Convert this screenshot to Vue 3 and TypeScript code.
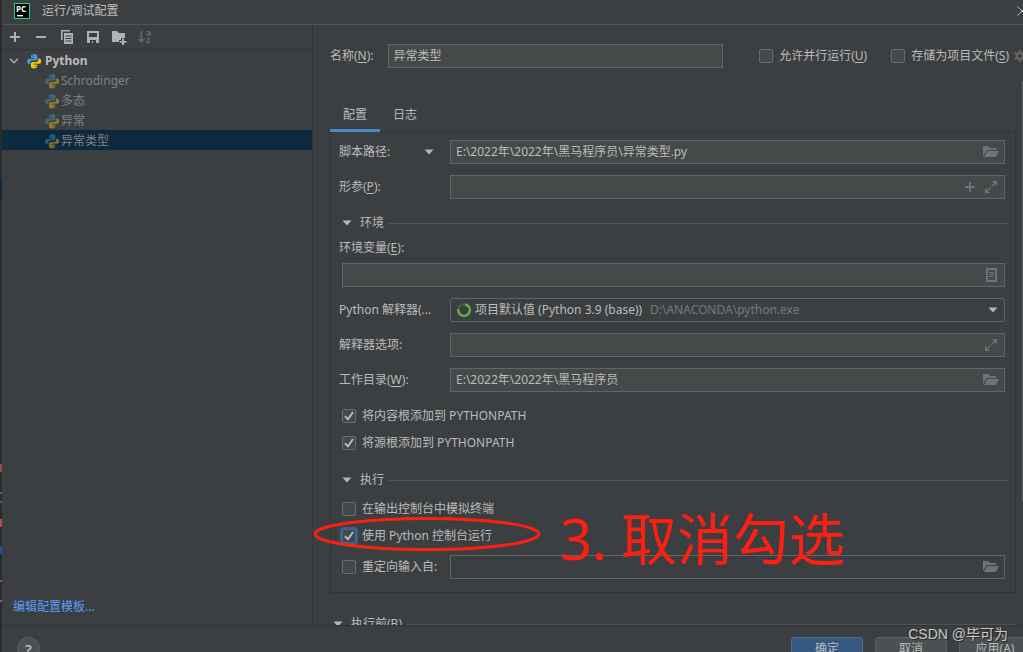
<script setup lang="ts">
import { ref } from 'vue'

const configs = ['Schrodinger', '多态', '异常', '异常类型']
const selected = ref('异常类型')
const name = ref('异常类型')
const scriptPath = ref('E:\\2022年\\2022年\\黑马程序员\\异常类型.py')
const params = ref('')
const envVars = ref('')
const interpreterOptions = ref('')
const workDir = ref('E:\\2022年\\2022年\\黑马程序员')
const redirectFrom = ref('')
const parallel = ref(false)
const storeAsFile = ref(false)
const addContentRoots = ref(true)
const addSourceRoots = ref(true)
const emulateTerminal = ref(false)
const runWithConsole = ref(true)
const redirectInput = ref(false)
</script>

<template>
  <div class="screen">
    <svg class="defs" width="0" height="0" aria-hidden="true">
      <defs>
        <symbol id="py" viewBox="0 0 16 16">
          <path class="py-blue" d="M8 1C5.6 1 5 2 5 3.2V5h3.4v.7H3.2C1.800 5.700 1 6.700 1 8.300s.8 2.700 2 2.700h1.300V9.400C4.300 8.200 5.300 7.400 6.400 7.400h3.300c1 0 1.700-.8 1.700-1.700V3.200C11.400 1.700 10.200 1 8 1zM6.500 2.200a.7.7 0 1 1 0 1.400.7.7 0 0 1 0-1.400z" />
          <path class="py-gold" d="M8.200 15.500c2.400 0 3-1 3-2.200v-1.800H7.800v-.7H13c1.400 0 2.200-1 2.200-2.600S14.400 5.500 13.200 5.500h-1v1.400c0 1.200-1 2-2.100 2H6.600c-1 0-1.700.8-1.700 1.700v2.700c0 1.500 1.200 2.200 3.300 2.200zm1.500-1.200a.7.7 0 1 1 0-1.400.7.7 0 0 1 0 1.400z" />
        </symbol>
        <symbol id="folder" viewBox="0 0 16 12">
          <path d="M0 0h5l2 2h6v2H4L0 10z" />
          <path d="M4.500 5H16l-3 6H1z" />
        </symbol>
        <symbol id="expand" viewBox="0 0 12 12">
          <path d="M7 0h5v5zM9 2l1 1-3 3-1-1zM0 7v5h5zM5 6l1 1-3 3-1-1z" />
        </symbol>
        <symbol id="down" viewBox="0 0 10 6"><path d="M0.500 0.500h9L5 5.500z" /></symbol>
        <symbol id="tick" viewBox="0 0 14 14"><path d="M3 7.200l3 3L11 3" fill="none" stroke="#bbbbbb" stroke-width="2" /></symbol>
      </defs>
    </svg>

    <div class="backdrop-edge"></div>
    <div class="dialog">
      <header class="titlebar">
        <svg class="logo" width="16" height="16" viewBox="0 0 16 16" aria-hidden="true">
          <rect width="16" height="16" fill="#21d789" /><rect x="1" y="1" width="14" height="14" fill="#000" />
          <text x="2" y="9" fill="#fff" font-size="8" font-weight="700">PC</text>
          <path d="M3 12h6v1.400H3z" fill="#fff" />
        </svg>
        <h1>运行/调试配置</h1>
        <button class="close" aria-label="关闭">
          <svg width="10" height="10" viewBox="0 0 10 10"><path d="M0.500 0.500l9 9M9.500 0.500l-9 9" fill="none" stroke="#bbb" /></svg>
        </button>
      </header>

      <div class="body">
        <aside class="sidebar">
          <div class="toolbar">
            <button aria-label="添加"><svg width="16" height="16" viewBox="0 0 16 16"><path d="M7 3h2v4h4v2H9v4H7V9H3V7h4z" /></svg></button>
            <button aria-label="移除"><svg width="16" height="16" viewBox="0 0 16 16"><path d="M3 7h10v2H3z" /></svg></button>
            <button aria-label="复制">
              <svg width="16" height="16" viewBox="0 0 16 16"><path d="M2 1h9v1.600H3.600V11H2z" /><path fill-rule="evenodd" d="M5 4h9v11H5zM6.500 6.500v1h6v-1zm0 2.500v1h6V9zm0 2.500v1h6v-1z" /></svg>
            </button>
            <button aria-label="保存">
              <svg width="16" height="16" viewBox="0 0 16 16"><path fill-rule="evenodd" d="M2 2h12v12H2zM4 4v4h8V4zm1 7v3h2v-2h1v2h3v-3z" /></svg>
            </button>
            <button aria-label="新建文件夹">
              <svg width="16" height="16" viewBox="0 0 16 16"><path d="M1 2h5l2 2h6v5h-4v2H8v2H1z" /><path d="M11 9.500h2V12h2.500v1.800H13V16h-2v-2.200H8.700V12H11z" /></svg>
            </button>
            <button class="sort" aria-label="排序" disabled>
              <svg width="16" height="16" viewBox="0 0 16 16"><path d="M3.500 2h1.800v8H8l-3.600 4L1 10h2.500z" /><text x="9" y="7" font-size="9" font-weight="700">a</text><text x="9" y="14" font-size="9" font-weight="700">z</text></svg>
            </button>
          </div>

          <div class="tree" role="tree">
            <div class="row root" role="treeitem" aria-expanded="true">
              <svg class="chevron" width="10" height="6" viewBox="0 0 10 6"><path d="M1 0.800l4 4 4-4" fill="none" stroke="#adadad" stroke-width="1.400" /></svg>
              <svg class="py" width="16" height="16"><use href="#py" /></svg>
              <span>Python</span>
            </div>
            <div
              v-for="c in configs"
              :key="c"
              class="row leaf"
              :class="{ selected: c === selected }"
              role="treeitem"
              :aria-selected="c === selected"
              @click="selected = c"
            >
              <svg class="py" width="16" height="16"><use href="#py" /></svg>
              <span>{{ c }}</span>
            </div>
          </div>
          <a class="templates" href="#">编辑配置模板...</a>
        </aside>

        <main class="main">
          <div class="name-row">
            <label for="name">名称(<u>N</u>):</label>
            <div class="field name-field"><input id="name" v-model="name" type="text" /></div>
            <label class="check parallel">
              <span class="box"><input v-model="parallel" type="checkbox" /><svg v-if="parallel" width="14" height="14"><use href="#tick" /></svg></span>
              <span>允许并行运行(<u>U</u>)</span>
            </label>
            <label class="check store">
              <span class="box"><input v-model="storeAsFile" type="checkbox" /><svg v-if="storeAsFile" width="14" height="14"><use href="#tick" /></svg></span>
              <span>存储为项目文件(<u>S</u>)</span>
            </label>
            <button class="gear" aria-label="存储设置">
              <svg width="12" height="12" viewBox="0 0 12 12"><g stroke="#636567" stroke-width="2.600"><path d="M6 0v12M0.800 3l10.400 6M0.800 9l10.400-6" /></g><circle cx="6" cy="6" r="4" fill="#636567" /><circle cx="6" cy="6" r="1.900" fill="#3c3f41" /></svg>
            </button>
          </div>

          <div class="tabs" role="tablist">
            <button class="tab active" role="tab" aria-selected="true">配置</button>
            <button class="tab" role="tab" aria-selected="false">日志</button>
          </div>

          <section class="panel">
            <div class="rows">
              <div class="form-row">
                <div class="label-col">
                  <label for="script">脚本路径:</label>
                  <button class="mode" aria-label="选择目标类型"><svg class="arrow" width="10" height="6"><use href="#down" /></svg></button>
                </div>
                <div class="field">
                  <input id="script" v-model="scriptPath" type="text" />
                  <button aria-label="浏览脚本"><svg width="16" height="12"><use href="#folder" /></svg></button>
                </div>
              </div>
              <div class="form-row">
                <label class="label-col" for="params"><span>形参(<u>P</u>):</span></label>
                <div class="field">
                  <input id="params" v-model="params" type="text" />
                  <button aria-label="插入宏"><svg width="10" height="10" viewBox="0 0 10 10"><path d="M4 0h2v4h4v2H6v4H4V6H0V4h4z" /></svg></button>
                  <button class="end" aria-label="展开形参"><svg width="12" height="12"><use href="#expand" /></svg></button>
                </div>
              </div>
            </div>

            <h2 class="section"><svg class="arrow" width="10" height="6"><use href="#down" /></svg><span>环境</span></h2>

            <div class="env">
              <label for="env">环境变量(<u>E</u>):</label>
              <div class="field">
                <input id="env" v-model="envVars" type="text" />
                <button class="end" aria-label="编辑环境变量">
                  <svg width="11" height="14" viewBox="0 0 11 14"><path fill-rule="evenodd" d="M0 0h11v14H0zM2 2v10h7V2z" /><path d="M3 4h5v1H3zM3 6h5v1H3zM3 8h5v1H3z" /></svg>
                </button>
              </div>
            </div>

            <div class="rows after-env">
              <div class="form-row">
                <label class="label-col" for="interpreter">Python 解释器(...</label>
                <div class="field combo">
                  <svg class="ring" width="14" height="14" viewBox="0 0 14 14"><circle cx="7" cy="7" r="5.800" fill="none" stroke="#3f7a35" stroke-width="2" stroke-dasharray="1.500 1" /><path d="M8 1.300A5.800 5.800 0 1 1 1.300 6" fill="none" stroke="#62b543" stroke-width="2.200" /></svg>
                  <select id="interpreter"><option>项目默认值 (Python 3.9 (base))</option></select>
                  <span class="exe">D:\ANACONDA\python.exe</span>
                  <svg class="arrow" width="10" height="6"><use href="#down" /></svg>
                </div>
              </div>
              <div class="form-row">
                <label class="label-col" for="iopts">解释器选项:</label>
                <div class="field">
                  <input id="iopts" v-model="interpreterOptions" type="text" />
                  <button class="end" aria-label="展开选项"><svg width="12" height="12"><use href="#expand" /></svg></button>
                </div>
              </div>
              <div class="form-row">
                <label class="label-col" for="workdir"><span>工作目录(<u>W</u>):</span></label>
                <div class="field">
                  <input id="workdir" v-model="workDir" type="text" />
                  <button aria-label="浏览目录"><svg width="16" height="12"><use href="#folder" /></svg></button>
                </div>
              </div>
            </div>

            <div class="checks roots">
              <label class="check">
                <span class="box"><input v-model="addContentRoots" type="checkbox" /><svg v-if="addContentRoots" width="14" height="14"><use href="#tick" /></svg></span>
                <span>将内容根添加到 PYTHONPATH</span>
              </label>
              <label class="check">
                <span class="box"><input v-model="addSourceRoots" type="checkbox" /><svg v-if="addSourceRoots" width="14" height="14"><use href="#tick" /></svg></span>
                <span>将源根添加到 PYTHONPATH</span>
              </label>
            </div>

            <h2 class="section"><svg class="arrow" width="10" height="6"><use href="#down" /></svg><span>执行</span></h2>

            <div class="checks">
              <label class="check">
                <span class="box"><input v-model="emulateTerminal" type="checkbox" /><svg v-if="emulateTerminal" width="14" height="14"><use href="#tick" /></svg></span>
                <span>在输出控制台中模拟终端</span>
              </label>
              <label class="check">
                <span class="box focused"><input v-model="runWithConsole" type="checkbox" /><svg v-if="runWithConsole" width="14" height="14"><use href="#tick" /></svg></span>
                <span>使用 Python 控制台运行</span>
              </label>
            </div>
            <div class="form-row redirect">
              <label class="check label-col">
                <span class="box"><input v-model="redirectInput" type="checkbox" /><svg v-if="redirectInput" width="14" height="14"><use href="#tick" /></svg></span>
                <span>重定向输入自:</span>
              </label>
              <div class="field off">
                <input v-model="redirectFrom" type="text" aria-label="重定向输入自" disabled />
                <button aria-label="浏览输入文件" disabled><svg width="16" height="12"><use href="#folder" /></svg></button>
              </div>
            </div>
          </section>

          <h2 class="section before"><svg class="arrow" width="10" height="6"><use href="#down" /></svg><span>执行前(<u>B</u>)</span></h2>
          <div class="scrollbar"></div>
        </main>
      </div>

      <footer class="footer">
        <button class="help" aria-label="帮助">?</button>
        <button class="btn primary">确定</button>
        <button class="btn">取消</button>
        <button class="btn">应用(<u>A</u>)</button>
      </footer>
    </div>

    <svg class="ellipse" width="228" height="36" viewBox="0 0 228 36" aria-hidden="true">
      <ellipse cx="113" cy="18" rx="112" ry="15.500" fill="none" stroke="#fd1f12" stroke-width="3" />
    </svg>
    <div class="note"><span>3.</span><span>取消勾选</span></div>
    <div class="watermark">CSDN @毕可为</div>
  </div>
</template>

<style>
html,
body,
#app {
  height: 100%;
  margin: 0;
  overflow: hidden;
  background: #3c3f41;
}
</style>

<style scoped>
.screen {
  position: relative;
  display: flex;
  height: 100%;
  overflow: hidden;
  color: #bbbbbb;
  font: 12px/20px "Noto Sans", "Noto Sans CJK SC", sans-serif;
}
.screen * { box-sizing: border-box; }
.defs { position: absolute; }
button, input, select { font: inherit; color: inherit; margin: 0; padding: 0; border: 0; background: none; outline: 0; }
button { display: flex; align-items: center; justify-content: center; }
svg { display: block; flex: none; }
h1, h2 { margin: 0; font: inherit; }
u { text-underline-offset: 2px; }
label { white-space: nowrap; }

.backdrop-edge {
  flex: none;
  width: 2px;
  background: linear-gradient(#2b2b2b 180px, #0d293e 180px 200px, #2b2b2b 200px 464px, #9c4a48 464px 472px, #2b2b2b 472px 492px, #2a62b5 492px 494px, #2b2b2b 494px 501px, #2a62b5 501px 503px, #2b2b2b 503px 519px, #b0504c 519px 527px, #2b2b2b 527px 546px, #214f9c 546px 554px, #2b2b2b 554px 580px, #b0504c 580px 582px, #2b2b2b 582px 600px, #b0504c 600px 602px, #2b2b2b 602px);
}
.dialog { flex: 1; min-width: 0; display: flex; flex-direction: column; }

.titlebar { flex: none; display: flex; align-items: center; gap: 12px; height: 25px; padding: 0 0 3px 12px; border-bottom: 1px solid #515355; }
.titlebar h1 { flex: 1; }
.logo { font-family: "Open Sans", sans-serif; }
.close { margin-right: -4px; }

.body { flex: 1; min-height: 0; display: flex; border-bottom: 1px solid #323435; }
.sidebar { flex: none; width: 311px; display: flex; flex-direction: column; border-right: 1px solid #323435; }
.toolbar { display: flex; gap: 10px; height: 25px; padding-left: 5px; border-bottom: 1px solid #323435; align-items: center; }
.toolbar svg { fill: #afb1b3; }
.toolbar .sort svg { fill: #66696b; }
.tree { flex: 1; }
.row { display: flex; align-items: center; height: 20px; padding-top: 2px; }
.root { padding-left: 7px; font-weight: 700; }
.root .py { margin: 0 3px 0 7px; }
.leaf { padding-left: 42px; color: #808284; }
.leaf .py { opacity: 0.45; margin-right: 1px; }
.selected { background: #0d293e; }
.py-blue { fill: #3e9bcf; }
.py-gold { fill: #f5c40b; }
.templates { align-self: flex-start; margin: 0 0 8px 11px; color: #589df6; text-decoration: none; }

.main { position: relative; flex: 1; min-width: 0; overflow: hidden; padding: 19px 7px 0 17px; }
.name-row { display: flex; align-items: center; margin-right: -10px; }
.name-field { margin: 0 36px 0 14px; }
.store { margin-left: 24px; }
.gear { flex: none; margin-left: 5px; }
.tabs { display: flex; margin-top: 32px; }
.tab { height: 32px; padding: 4px 13px 3px; border-bottom: 3px solid transparent; }
.tab.active { position: relative; border-bottom-color: #4a88c7; }

.panel { margin-top: -1px; padding: 8px 10px 13px 8px; border: 1px solid #323435; }
.rows { display: flex; flex-direction: column; gap: 11px; }
.after-env { margin-top: 11px; }
.form-row { display: flex; align-items: center; }
.label-col { flex: none; display: flex; align-items: center; width: 111px; }
.mode { margin: 0 16px 0 auto; }
.arrow { fill: #b4b6b7; }

.field { flex: 1; min-width: 0; display: flex; align-items: center; height: 24px; padding: 0 5px; border: 1px solid #646464; background: #45494a; }
.field input { flex: 1; min-width: 0; height: 20px; }
.field button { margin-left: 10px; }
.field button svg { fill: #6a7479; }
.field .end { margin-right: 2px; }
.field.off { background: #3c3f41; }
.combo { border-radius: 3px; background: #3c3f41; padding: 0 6px; }
.combo select { appearance: none; margin: 0 7px 0 4px; }
.combo .exe { flex: 1; color: #787878; }

.section { display: flex; align-items: center; gap: 8px; margin: 14px -3px 0 3px; }
.section::after { content: ""; flex: 1; height: 1px; margin-left: -4px; background: #515355; }
.env { display: flex; flex-direction: column; gap: 5px; margin-top: 5px; }
.env .field { flex: none; margin-left: 3px; }
.checks { display: flex; flex-direction: column; align-items: flex-start; gap: 7px; margin: 9px 0 0 3px; }
.checks.roots { margin-top: 14px; }
.checks + .section { margin-top: 17px; }
.check { flex: none; display: flex; align-items: center; gap: 6px; }
.box { display: grid; width: 14px; height: 14px; }
.box > * { grid-area: 1 / 1; }
.box svg { pointer-events: none; position: relative; }
.box input { appearance: none; width: 14px; height: 14px; border: 1px solid #6b6b6b; border-radius: 2px; background: #43494a; }
.box.focused input { border-color: #43698f; box-shadow: 0 0 0 2px #3d6185; }
.redirect { margin: 9px 0 0 3px; }
.redirect .label-col { width: 108px; }
.section.before { margin: 21px 0 0 3px; }
.scrollbar { position: absolute; top: 56px; bottom: 124px; right: 0; width: 1px; background: #616364; }

.footer { flex: none; display: flex; align-items: flex-start; gap: 12px; height: 26px; margin-right: -8px; padding: 11px 0 0 15px; }
.help { width: 23px; height: 23px; margin-right: auto; border: 1px solid #5e6163; border-radius: 50%; background: #4c5052; font-size: 15px; font-weight: 600; }
.btn { width: 72px; height: 24px; border: 1px solid #5e6060; border-radius: 3px; background: #4c5052; }
.btn.primary { border-color: #4c708c; background: #365880; }

.ellipse { position: absolute; left: 314px; top: 516px; pointer-events: none; }
.note { position: absolute; left: 560px; top: 500px; display: flex; gap: 14px; color: #fd1f12; font-size: 56px; line-height: 76px; pointer-events: none; }
.watermark { position: absolute; right: 15px; bottom: 8px; color: #c9cacb; font-family: "Liberation Sans", "Noto Sans CJK SC", sans-serif; font-size: 14px; line-height: 20px; text-shadow: 1px 1px 1px #222; pointer-events: none; }
</style>
